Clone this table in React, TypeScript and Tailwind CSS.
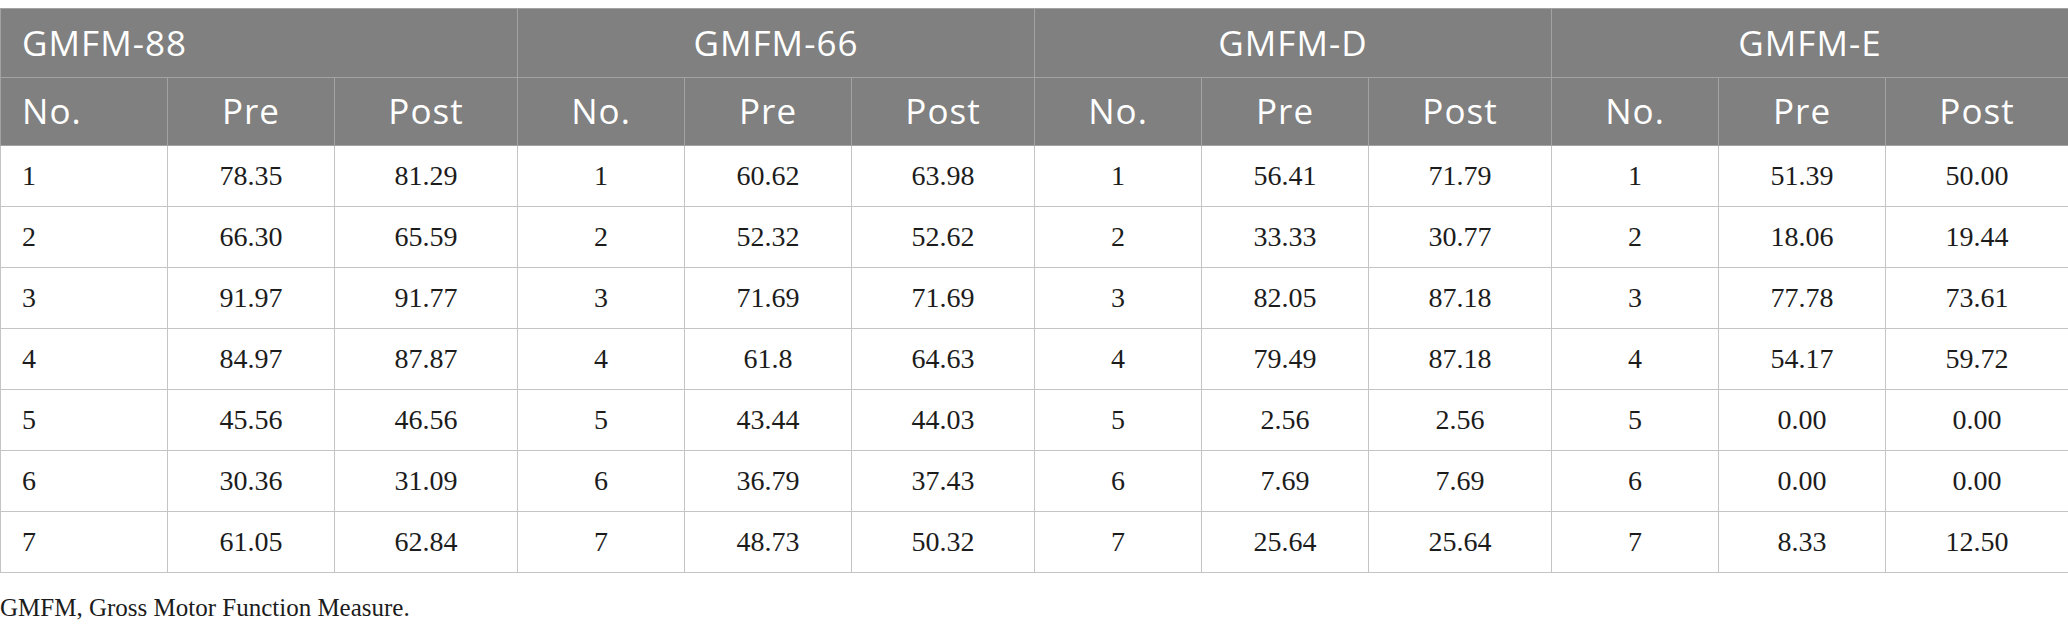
import React from 'react';

const groups = ['GMFM-88', 'GMFM-66', 'GMFM-D', 'GMFM-E'];

const rows = [
  ['1', '78.35', '81.29', '1', '60.62', '63.98', '1', '56.41', '71.79', '1', '51.39', '50.00'],
  ['2', '66.30', '65.59', '2', '52.32', '52.62', '2', '33.33', '30.77', '2', '18.06', '19.44'],
  ['3', '91.97', '91.77', '3', '71.69', '71.69', '3', '82.05', '87.18', '3', '77.78', '73.61'],
  ['4', '84.97', '87.87', '4', '61.8', '64.63', '4', '79.49', '87.18', '4', '54.17', '59.72'],
  ['5', '45.56', '46.56', '5', '43.44', '44.03', '5', '2.56', '2.56', '5', '0.00', '0.00'],
  ['6', '30.36', '31.09', '6', '36.79', '37.43', '6', '7.69', '7.69', '6', '0.00', '0.00'],
  ['7', '61.05', '62.84', '7', '48.73', '50.32', '7', '25.64', '25.64', '7', '8.33', '12.50'],
];

const sub = ['No.', 'Pre', 'Post'];

export default function App() {
  return (
    <div className="w-[2068px] min-h-screen bg-white pt-2">
      <table className="w-full table-fixed border-collapse">
        <colgroup>
          {groups.map((g) => (
            <React.Fragment key={g}>
              <col className="w-[167px]" />
              <col className="w-[167px]" />
              <col className="w-[183px]" />
            </React.Fragment>
          ))}
        </colgroup>
        <thead className="bg-[#7f807f] text-white font-['Open_Sans',sans-serif] text-[35px] tracking-[0.03em]">
          <tr className="h-[69px]">
            {groups.map((g, i) => (
              <th
                key={g}
                colSpan={3}
                className={`border border-[#a3a3a3] font-normal px-[21px] ${i === 0 ? 'text-left' : 'text-center'}`}
              >
                {g}
              </th>
            ))}
          </tr>
          <tr className="h-[68px]">
            {groups.map((g, gi) =>
              sub.map((s, si) => (
                <th
                  key={g + s}
                  className={`border border-[#a3a3a3] font-normal px-[21px] ${gi === 0 && si === 0 ? 'text-left' : 'text-center'}`}
                >
                  {s}
                </th>
              ))
            )}
          </tr>
        </thead>
        <tbody className="font-['Liberation_Serif',serif] text-[28px] text-[#1c1c1c]">
          {rows.map((r, ri) => (
            <tr key={ri} className="h-[61px]">
              {r.map((c, ci) => (
                <td
                  key={ci}
                  className={`border border-[#c4c4c4] px-[21px] ${ci === 0 ? 'text-left' : 'text-center'}`}
                >
                  {c}
                </td>
              ))}
            </tr>
          ))}
        </tbody>
      </table>
      <p className="mt-[16px] font-['Liberation_Serif',serif] text-[25px] text-[#1c1c1c]">
        GMFM, Gross Motor Function Measure.
      </p>
    </div>
  );
}
